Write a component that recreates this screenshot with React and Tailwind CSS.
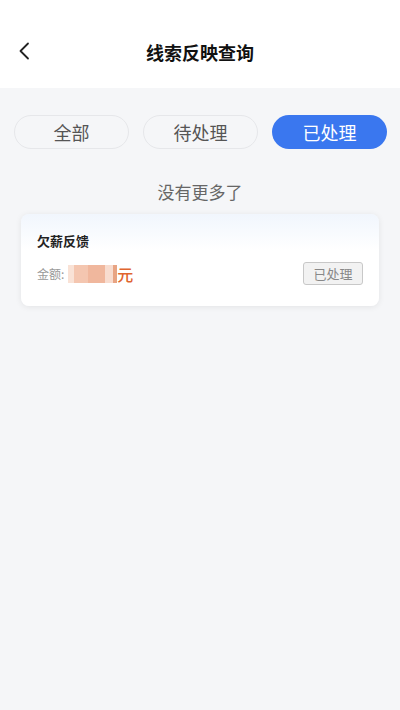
import React from "react";

const font = { fontFamily: '"Noto Sans CJK SC", "Noto Sans", sans-serif' };

export default function App() {
  const tabs = ["全部", "待处理", "已处理"];
  return (
    <div className="w-[400px] h-[710px] bg-[#f5f6f8] flex flex-col" style={font}>
      <div className="h-[88px] bg-white relative flex items-center justify-center pt-[16px]">
        <svg className="absolute left-[17px] top-[41px]" width="16" height="20" viewBox="0 0 16 20" fill="none">
          <path d="M11 2.5 L3.5 10 L11 17.5" stroke="#222" strokeWidth="1.8" strokeLinecap="round" strokeLinejoin="round" />
        </svg>
        <div className="text-[18px] font-bold text-[#111] leading-none">线索反映查询</div>
      </div>
      <div className="flex gap-[14px] pl-[14px] pt-[27px]">
        {tabs.map((t, i) => (
          <div
            key={t}
            className={
              i === 2
                ? "w-[115px] h-[34px] rounded-full bg-[#3a77ef] text-white text-[18px] flex items-center justify-center leading-none"
                : "w-[115px] h-[34px] rounded-full bg-[#f5f6f8] border border-[#e6e7ea] text-[#555] text-[18px] flex items-center justify-center leading-none"
            }
          >
            {t}
          </div>
        ))}
      </div>
      <div className="text-center text-[17px] text-[#666] mt-[34px] leading-none">没有更多了</div>
      <div className="mx-[21px] mt-[14px] h-[92px] rounded-[8px] bg-gradient-to-b from-[#f1f6fd] to-[#ffffff] to-[40%] shadow-[0_1px_6px_rgba(0,0,0,0.08)] px-[16px] pt-[20px]">
        <div className="text-[13px] font-bold text-[#222] leading-none">欠薪反馈</div>
        <div className="flex items-center justify-between mt-[15px]">
          <div className="flex items-center">
            <span className="text-[12px] text-[#999]">金额:</span>
            <span className="ml-[4px] flex h-[18px] w-[49px] blur-[0.6px]">
              <span className="w-[6px] h-full bg-[#f9e2d6]" />
              <span className="w-[14px] h-full bg-[#f4c6b0]" />
              <span className="w-[17px] h-full bg-[#f0b79d]" />
              <span className="w-[8px] h-full bg-[#f8dccf]" />
              <span className="w-[4px] h-full bg-[#e8a483]" />
            </span>
            <span className="text-[16px] text-[#e0652f] font-medium leading-none">元</span>
          </div>
          <div className="w-[60px] h-[23px] rounded-[3px] border border-[#c8c8c8] bg-[#f2f2f2] text-[13px] text-[#888] flex items-center justify-center leading-none">
            已处理
          </div>
        </div>
      </div>
    </div>
  );
}
